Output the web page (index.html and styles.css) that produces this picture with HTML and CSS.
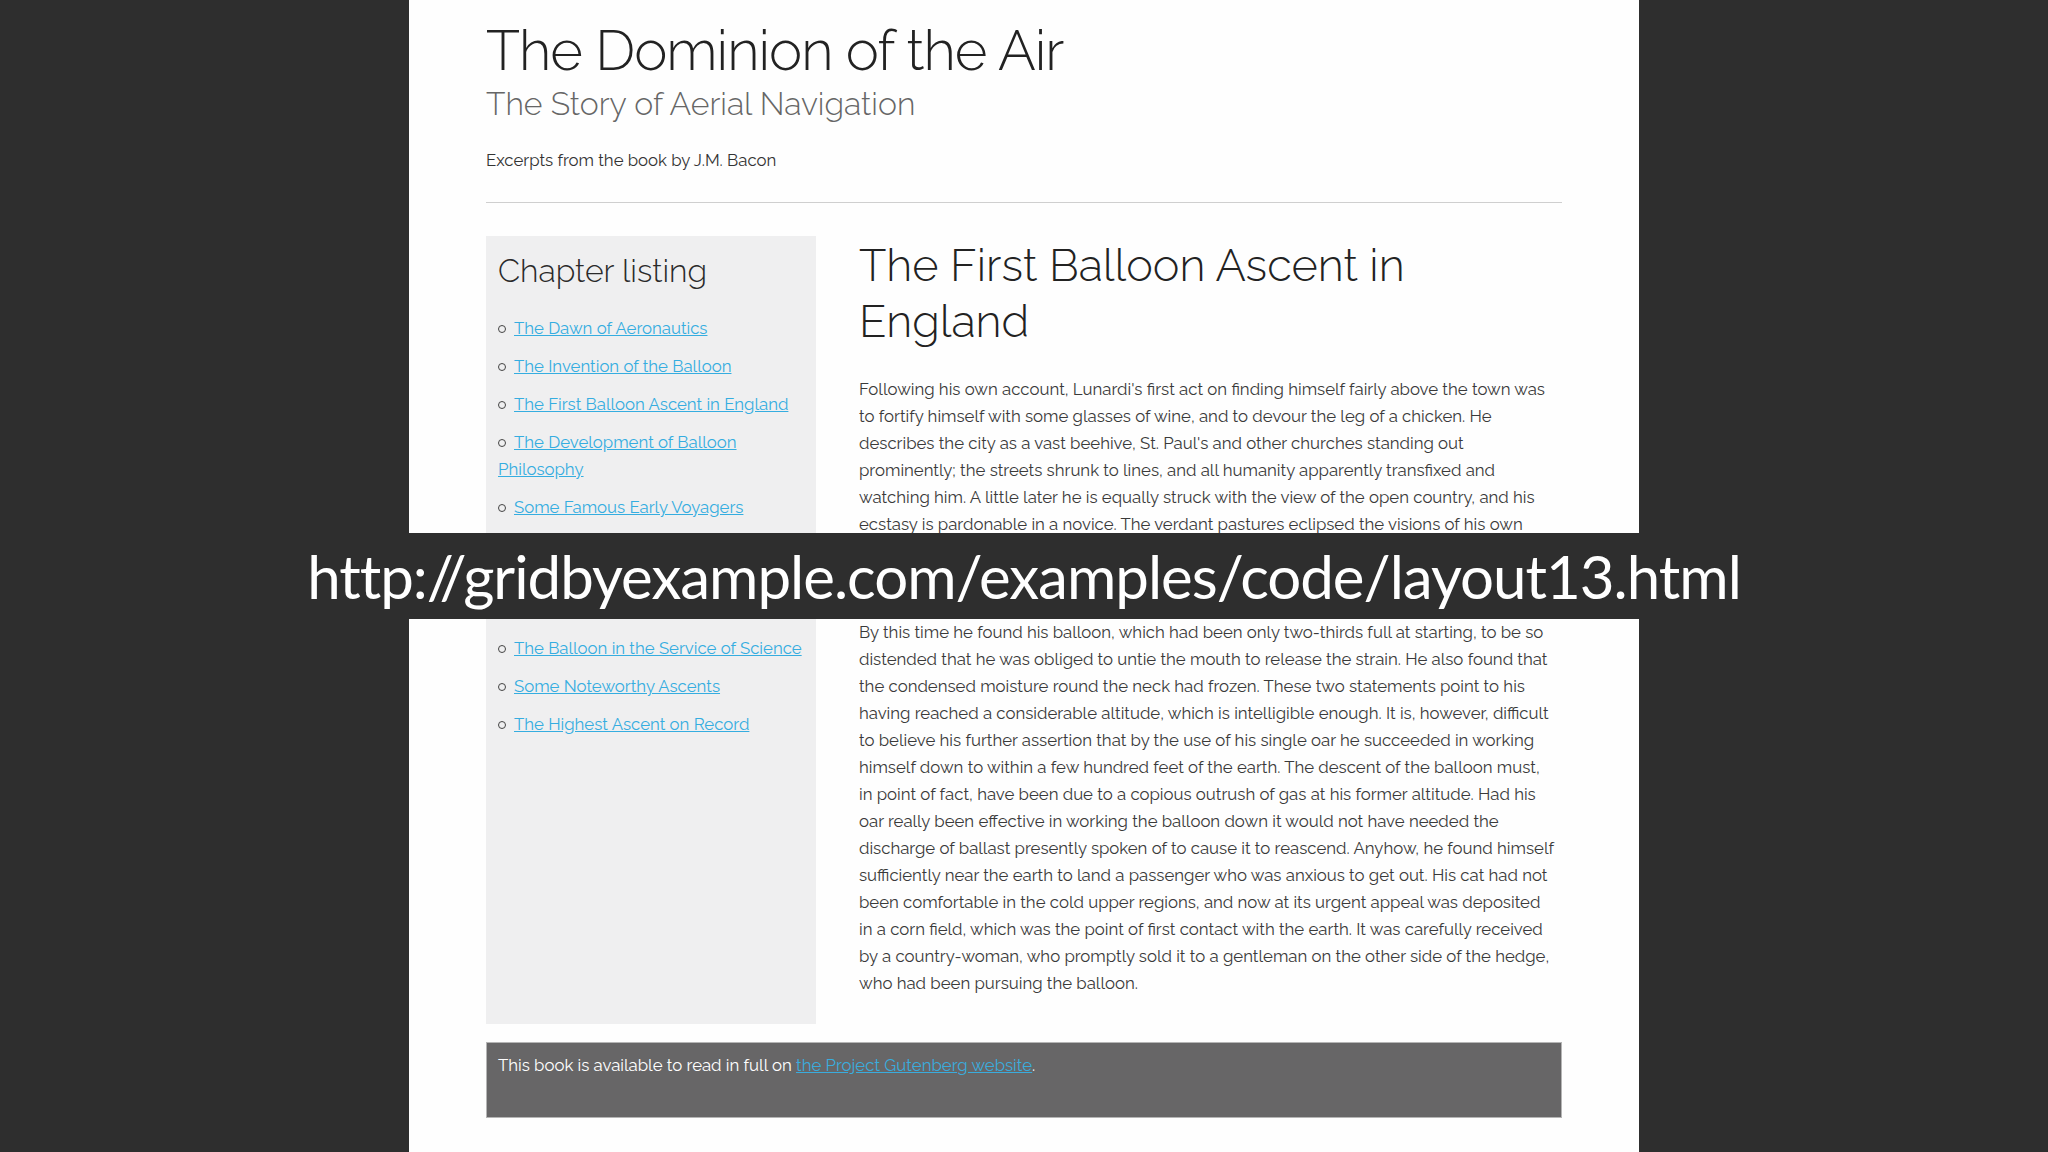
FILE: index.html
```html
<!DOCTYPE html>
<html lang="en">
<head>
<meta charset="utf-8">
<title>The Dominion of the Air</title>
<link rel="stylesheet" href="styles.css">
</head>
<body>
<div class="page">
  <header class="masthead">
    <h1 class="title">The Dominion of the Air</h1>
    <p class="subtitle">The Story of Aerial Navigation</p>
    <p class="intro">Excerpts from the book by J.M. Bacon</p>
  </header>
  <div class="layout">
    <aside class="sidebar">
      <h2 class="sidebar-title">Chapter listing</h2>
      <ul class="chapters">
        <li><a href="#">The Dawn of Aeronautics</a></li>
        <li><a href="#">The Invention of the Balloon</a></li>
        <li><a href="#">The First Balloon Ascent in England</a></li>
        <li><a href="#">The Development of Balloon Philosophy</a></li>
        <li><a href="#">Some Famous Early Voyagers</a></li>
        <li><a href="#">The Parachute</a></li>
        <li><a href="#">The Employment of the Balloon in Warfare</a></li>
        <li><a href="#">The Balloon in the Service of Science</a></li>
        <li><a href="#">Some Noteworthy Ascents</a></li>
        <li><a href="#">The Highest Ascent on Record</a></li>
      </ul>
    </aside>
    <article class="content">
      <h2 class="content-title">The First Balloon Ascent in England</h2>
      <p>Following his own account, Lunardi's first act on finding himself fairly above the town was<br>
      to fortify himself with some glasses of wine, and to devour the leg of a chicken. He<br>
      describes the city as a vast beehive, St. Paul's and other churches standing out<br>
      prominently; the streets shrunk to lines, and all humanity apparently transfixed and<br>
      watching him. A little later he is equally struck with the view of the open country, and his<br>
      ecstasy is pardonable in a novice. The verdant pastures eclipsed the visions of his own<br>
      native land; the hedgerows and homesteads lay beneath him like a garden, and he<br>
      declared the prospect the most enchanting he had ever beheld.</p>
      <p>By this time he found his balloon, which had been only two-thirds full at starting, to be so<br>
      distended that he was obliged to untie the mouth to release the strain. He also found that<br>
      the condensed moisture round the neck had frozen. These two statements point to his<br>
      having reached a considerable altitude, which is intelligible enough. It is, however, difficult<br>
      to believe his further assertion that by the use of his single oar he succeeded in working<br>
      himself down to within a few hundred feet of the earth. The descent of the balloon must,<br>
      in point of fact, have been due to a copious outrush of gas at his former altitude. Had his<br>
      oar really been effective in working the balloon down it would not have needed the<br>
      discharge of ballast presently spoken of to cause it to reascend. Anyhow, he found himself<br>
      sufficiently near the earth to land a passenger who was anxious to get out. His cat had not<br>
      been comfortable in the cold upper regions, and now at its urgent appeal was deposited<br>
      in a corn field, which was the point of first contact with the earth. It was carefully received<br>
      by a country-woman, who promptly sold it to a gentleman on the other side of the hedge,<br>
      who had been pursuing the balloon.</p>
    </article>
  </div>
  <footer class="footer">
    <p>This book is available to read in full on <a href="#">the Project Gutenberg website</a>.</p>
  </footer>
</div>
<div class="url-banner">http://gridbyexample.com/examples/code/layout13.html</div>
</body>
</html>
```

FILE: styles.css
```css
* {
  box-sizing: border-box;
}

html,
body {
  margin: 0;
  padding: 0;
}

body {
  background: #2e2e2e;
  font-family: "Raleway", "Lato", sans-serif;
  font-size: 16.8px;
  line-height: 27px;
  color: #3a3a3a;
}

.page {
  width: 1230px;
  min-height: 1152px;
  margin: 0 auto;
  padding: 20px 77px 40px;
  background: #fefefe;
}

.masthead {
  padding-bottom: 28px;
  border-bottom: 1px solid #cfcfcf;
}

.title {
  margin: 0;
  font-size: 56px;
  line-height: 60px;
  font-weight: 300;
  letter-spacing: -1px;
  color: #222;
}

.subtitle {
  margin: 6px 0 0;
  font-size: 32px;
  line-height: 36px;
  font-weight: 300;
  color: #666;
}

.intro {
  margin: 25px 0 0;
  color: #333;
}

.layout {
  display: grid;
  grid-template-columns: 330px 1fr;
  column-gap: 43px;
  margin-top: 33px;
}

.sidebar {
  background: #efeff0;
  padding: 15px 6px 10px 12px;
}

.sidebar-title {
  margin: 0;
  font-size: 32px;
  line-height: 40px;
  font-weight: 300;
  color: #2a2a2a;
}

.chapters {
  margin: 24px 0 0;
  padding: 0;
  list-style: none;
}

.chapters li {
  margin-bottom: 11px;
}

.chapters li::before {
  content: "";
  display: inline-block;
  width: 6px;
  height: 6px;
  margin-right: 8px;
  border: 1.6px solid #444;
  border-radius: 50%;
  vertical-align: 1px;
}

a {
  color: #35ade0;
}

.content-title {
  margin: 2px 0 26px;
  font-size: 45px;
  line-height: 56px;
  font-weight: 300;
  color: #222;
}

.content p {
  margin: 0 0 27px;
}

.footer {
  margin-top: 18px;
  min-height: 76px;
  padding: 9px 11px;
  border: 1px solid #b5b5b5;
  background: #676667;
  color: #fff;
}

.footer p {
  margin: 0;
}

.footer a {
  color: #3aacdd;
}

.url-banner {
  position: absolute;
  top: 533px;
  left: 0;
  right: 0;
  height: 86px;
  display: flex;
  align-items: center;
  justify-content: center;
  background: #2e2e2e;
  color: #fff;
  font-family: "Lato", sans-serif;
  font-size: 60px;
  letter-spacing: -1px;
  line-height: 1;
}
```
